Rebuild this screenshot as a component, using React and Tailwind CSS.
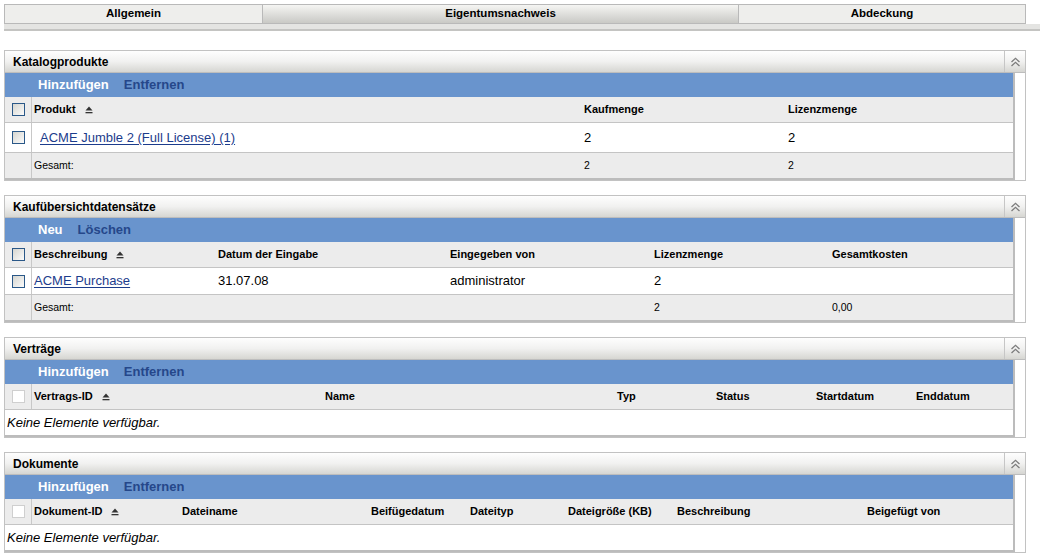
import React from "react";

function Cb({ disabled }) {
  return (
    <span
      className={
        disabled
          ? "block w-[13px] h-[13px] border border-[#cfcfcf] bg-white"
          : "block w-[13px] h-[13px] border border-[#2a5888] bg-linear-to-br from-[#d6d6d0] to-[#fbfbfb]"
      }
    />
  );
}

function SortIcon() {
  return (
    <svg width="8" height="8" viewBox="0 0 8 8" className="ml-[9px] shrink-0">
      <path d="M4 0.5 L7.5 4.5 H0.5Z" fill="#333" />
      <rect x="0.5" y="6" width="7" height="1.3" fill="#333" />
    </svg>
  );
}

function Collapse() {
  return (
    <svg width="11" height="10" viewBox="0 0 11 10" fill="none" stroke="#7d7d7d" strokeWidth="1.3">
      <path d="M1.5 5 L5.5 1.3 L9.5 5" />
      <path d="M1.5 9 L5.5 5.3 L9.5 9" />
    </svg>
  );
}

function Panel({ title, actions, cols, rows, total, empty, disabled, rowH, mt }) {
  return (
    <div className={`ml-[4px] w-[1022px] border border-[#c2c2c2] ${mt}`}>
      <div className="flex h-[22px] border-b border-[#bdbdbd] bg-linear-to-b from-[#fefefe] via-[#f1f1f0] to-[#d6d6d2]">
        <div className="flex-1 flex items-center pl-[8px] text-[12px] font-bold text-black">{title}</div>
        <div className="w-[21px] border-l border-[#c6c6c6] flex items-center justify-center">
          <Collapse />
        </div>
      </div>
      <div className="w-[1010px] border-r-2 border-b-2 border-[#bcbcbc]">
        <div className="h-[24px] bg-[#6994cd] flex items-center pl-[33px] gap-[15px] text-[13px] font-bold">
          <span className="text-white">{actions[0]}</span>
          <span className="text-[#25478a]">{actions[1]}</span>
        </div>
        <div className="flex h-[26px] bg-[#ececec] border-b border-[#c4c4c4] text-[11px] font-bold text-black">
          <div className="w-[27px] shrink-0 border-r border-[#c8c8c8] flex items-center justify-center">
            <Cb disabled={disabled} />
          </div>
          {cols.map((c, i) => (
            <div key={i} className="flex items-center pl-[2px] shrink-0" style={{ width: c.w }}>
              <span>{c.label}</span>
              {c.sort && <SortIcon />}
            </div>
          ))}
        </div>
        {empty ? (
          <div className="h-[25px] flex items-center pl-[2px] bg-white text-[13px] italic text-black">
            Keine Elemente verfügbar.
          </div>
        ) : (
          <>
            {rows.map((r, ri) => (
              <div key={ri} className="flex bg-white border-b border-[#c4c4c4] text-[13px] text-black" style={{ height: rowH }}>
                <div className="w-[27px] shrink-0 border-r border-[#c8c8c8] flex items-center justify-center">
                  <Cb />
                </div>
                {r.map((cell, ci) => (
                  <div key={ci} className="flex items-center pl-[2px] shrink-0" style={{ width: cols[ci].w }}>
                    {cell}
                  </div>
                ))}
              </div>
            ))}
            <div className="flex h-[25px] bg-[#ececec] text-[10.5px] text-black">
              <div className="w-[27px] shrink-0 border-r border-[#c8c8c8]" />
              {total.map((cell, ci) => (
                <div key={ci} className="flex items-center pl-[2px] shrink-0" style={{ width: cols[ci].w }}>
                  {cell}
                </div>
              ))}
            </div>
          </>
        )}
      </div>
    </div>
  );
}

const link = "text-[#1c3c8c] underline underline-offset-2";

export default function App() {
  return (
    <div className="w-[1044px] h-[555px] bg-white overflow-hidden font-['Liberation_Sans',Arial,sans-serif] pt-[4px]">
      <div className="ml-[4px] w-[1036px]">
        <div className="flex h-[20px] w-[1022px] text-[11.5px] font-bold text-black">
          <div className="w-[259px] border border-[#b9b9b9] bg-[#eeeeec] flex items-center justify-center">Allgemein</div>
          <div className="w-[475px] border-y border-[#b9b9b9] bg-linear-to-b from-[#f5f5f3] to-[#c9c9c5] flex items-center justify-center">Eigentumsnachweis</div>
          <div className="flex-1 border border-[#b9b9b9] bg-[#eeeeec] flex items-center justify-center">Abdeckung</div>
        </div>
        <div className="h-[7px] w-[1036px] bg-[#e4e4e2] border-b-2 border-[#c4c4c2]" />
      </div>

      <Panel
        mt="mt-[19px]"
        title="Katalogprodukte"
        actions={["Hinzufügen", "Entfernen"]}
        cols={[
          { label: "Produkt", w: 550, sort: true },
          { label: "Kaufmenge", w: 204 },
          { label: "Lizenzmenge", w: 227 },
        ]}
        rowH={30}
        rows={[[<span className={`${link} ml-[6px]`}>ACME Jumble 2 (Full License) (1)</span>, "2", "2"]]}
        total={["Gesamt:", "2", "2"]}
      />

      <Panel
        mt="mt-[14px]"
        title="Kaufübersichtdatensätze"
        actions={["Neu", "Löschen"]}
        cols={[
          { label: "Beschreibung", w: 184, sort: true },
          { label: "Datum der Eingabe", w: 232 },
          { label: "Eingegeben von", w: 204 },
          { label: "Lizenzmenge", w: 178 },
          { label: "Gesamtkosten", w: 153 },
        ]}
        rowH={27}
        rows={[[<span className={link}>ACME Purchase</span>, "31.07.08", "administrator", "2", ""]]}
        total={["Gesamt:", "", "", "2", "0,00"]}
      />

      <Panel
        mt="mt-[14px]"
        title="Verträge"
        actions={["Hinzufügen", "Entfernen"]}
        disabled
        empty
        cols={[
          { label: "Vertrags-ID", w: 291, sort: true },
          { label: "Name", w: 292 },
          { label: "Typ", w: 99 },
          { label: "Status", w: 100 },
          { label: "Startdatum", w: 100 },
          { label: "Enddatum", w: 89 },
        ]}
      />

      <Panel
        mt="mt-[14px]"
        title="Dokumente"
        actions={["Hinzufügen", "Entfernen"]}
        disabled
        empty
        cols={[
          { label: "Dokument-ID", w: 148, sort: true },
          { label: "Dateiname", w: 189 },
          { label: "Beifügedatum", w: 99 },
          { label: "Dateityp", w: 98 },
          { label: "Dateigröße (KB)", w: 109 },
          { label: "Beschreibung", w: 190 },
          { label: "Beigefügt von", w: 148 },
        ]}
      />
    </div>
  );
}
